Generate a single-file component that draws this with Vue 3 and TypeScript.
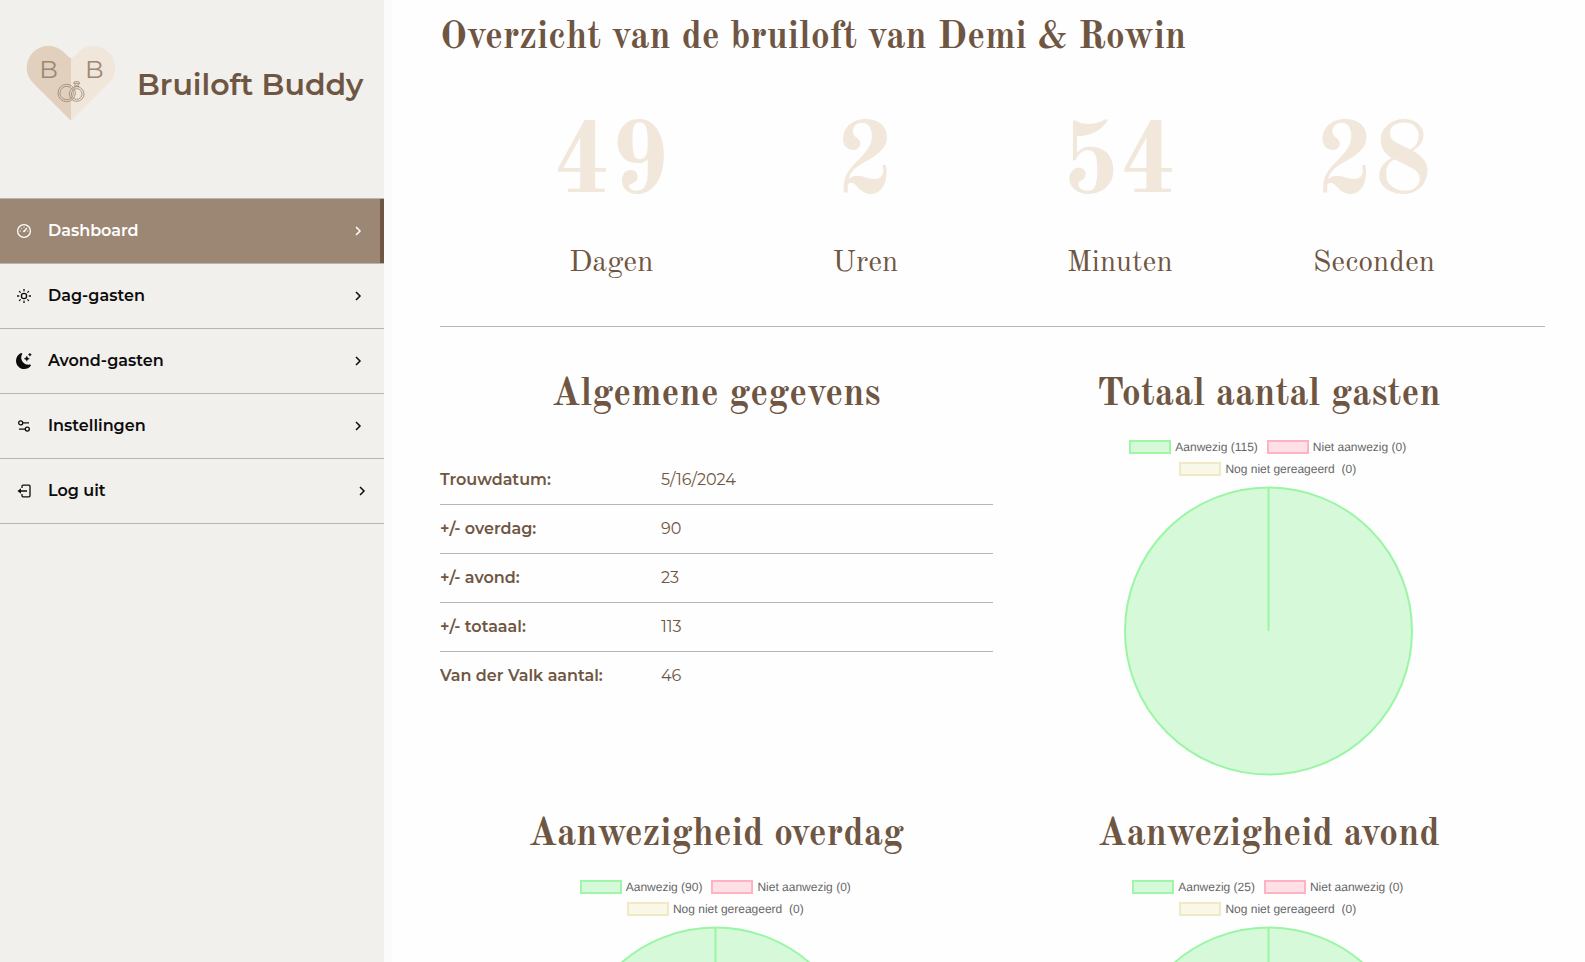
<script setup lang="ts">
interface MenuItem {
  label: string
  icon: 'gauge' | 'sun' | 'moon' | 'sliders'
  active?: boolean
}

interface Chart {
  title: string
  present: number
}

const menu: MenuItem[] = [
  { label: 'Dashboard', icon: 'gauge', active: true },
  { label: 'Dag-gasten', icon: 'sun' },
  { label: 'Avond-gasten', icon: 'moon' },
  { label: 'Instellingen', icon: 'sliders' },
]

const countdown = [
  { value: 49, label: 'Dagen' },
  { value: 2, label: 'Uren' },
  { value: 54, label: 'Minuten' },
  { value: 28, label: 'Seconden' },
]

const details = [
  { label: 'Trouwdatum:', value: '5/16/2024' },
  { label: '+/- overdag:', value: '90' },
  { label: '+/- avond:', value: '23' },
  { label: '+/- totaaal:', value: '113' },
  { label: 'Van der Valk aantal:', value: '46' },
]

const charts: Chart[] = [
  { title: 'Totaal aantal gasten', present: 115 },
  { title: 'Aanwezigheid overdag', present: 90 },
  { title: 'Aanwezigheid avond', present: 25 },
]
</script>

<template>
  <div class="layout">
    <aside class="sidebar">
      <div class="brand">
        <svg class="logo" viewBox="0 0 300 270" aria-hidden="true">
          <path d="M153 242 40 130A65 65 0 0 1 131 36L143 48Q149 54 153 55Z" fill="#e0d0bd" />
          <path d="M153 242 266 130A65 65 0 0 0 175 36L163 48Q157 54 153 55Z" fill="#f1e6da" />
          <text x="58" y="114" class="initial">B</text>
          <text x="195" y="114" class="initial">B</text>
          <g fill="none" stroke="#9c8774" stroke-width="2.5">
            <circle cx="140" cy="159" r="26" />
            <circle cx="140" cy="159" r="20" />
            <circle cx="170" cy="162" r="22" />
            <circle cx="170" cy="162" r="16" />
            <path d="M164 125h12l3 5-9 7-9-7zM164 136v5M176 136v5M161 130h18M164 139h12" />
          </g>
        </svg>
        <span class="brand-name">Bruiloft Buddy</span>
      </div>
      <nav class="menu">
        <a v-for="item in menu" :key="item.label" href="#" class="item" :class="{ active: item.active }">
          <svg class="icon" viewBox="0 0 16 16" aria-hidden="true">
            <g v-if="item.icon === 'gauge'" fill="none" stroke="currentColor" stroke-linecap="round">
              <circle cx="8" cy="8" r="6.4" stroke-width="1.3" />
              <path d="M8.2 8.2 10.6 5.4" stroke-width="1.4" />
              <circle cx="8" cy="8.4" r=".6" />
              <path d="M4.2 8h.3M5.2 5.3l.2.2M8 4.1v.3M11.6 8h.2" stroke-width="1" />
            </g>
            <g v-else-if="item.icon === 'sun'" fill="none" stroke="currentColor" stroke-width="1.3">
              <circle cx="8" cy="8" r="2.6" />
              <path d="M8 1v2.2M8 12.8V15M1 8h2.2M12.8 8H15M3.1 3.1l1.5 1.5M11.4 11.4l1.5 1.5M3.1 12.9l1.5-1.5M11.4 4.6l1.5-1.5" />
            </g>
            <g v-else-if="item.icon === 'moon'" fill="currentColor">
              <path d="M6 .3a.8.8 0 0 1 .1.9A7.2 7.2 0 0 0 5.2 4.5c0 4 3.3 7.2 7.3 7.2.5 0 1 0 1.5-.1a.8.8 0 0 1 .8.3.7.7 0 0 1 0 .9A8.3 8.3 0 0 1 8.3 16C3.7 16 0 12.3 0 7.7 0 4.3 2.1 1.3 5.1.1A.8.8 0 0 1 6 .3z" />
              <path d="M10.8 3.1c.5 1.7.9 2 2.6 2.6-1.7.6-2.1.9-2.6 2.6-.5-1.7-.9-2-2.6-2.6 1.7-.6 2.1-.9 2.6-2.6zM13.900.1c.3 1 .6 1.3 1.6 1.6-1 .3-1.3.6-1.6 1.6-.3-1-.6-1.3-1.6-1.6 1-.3 1.3-.6 1.600-1.600z" stroke="currentColor" stroke-width=".4" />
            </g>
            <g v-else fill="none" stroke="currentColor" stroke-width="1.3">
              <circle cx="4.7" cy="4.9" r="2" />
              <path d="M6.7 4.9H13M3 11.1h6.3" />
              <circle cx="11.3" cy="11.1" r="2" />
            </g>
          </svg>
          <span class="text">{{ item.label }}</span>
          <svg class="chevron" viewBox="0 0 12 12" aria-hidden="true"><path d="M4 2l4 4-4 4" /></svg>
        </a>
        <button type="button" class="item">
          <svg class="icon" viewBox="0 0 16 16" aria-hidden="true">
            <path d="M6 5V3.2q0-1 1-1h6q1 0 1 1v9.6q0 1-1 1H7q-1 0-1-1V11M3.5 8H11" fill="none" stroke="currentColor" stroke-width="1.3" />
            <path d="M1.500 8 5 5.300v5.400z" fill="currentColor" />
          </svg>
          <span class="text">Log uit</span>
          <svg class="chevron" viewBox="0 0 12 12" aria-hidden="true"><path d="M4 2l4 4-4 4" /></svg>
        </button>
      </nav>
    </aside>

    <main class="content">
      <h1>Overzicht van de bruiloft van Demi &amp; Rowin</h1>
      <section class="countdown">
        <div v-for="part in countdown" :key="part.label" class="part">
          <span class="number">{{ part.value }}</span>
          <span class="unit">{{ part.label }}</span>
        </div>
      </section>

      <div class="panels">
        <section class="panel">
          <h2>Algemene gegevens</h2>
          <table class="details">
            <tbody>
              <tr v-for="row in details" :key="row.label">
                <th scope="row">{{ row.label }}</th>
                <td>{{ row.value }}</td>
              </tr>
            </tbody>
          </table>
        </section>
        <section v-for="chart in charts" :key="chart.title" class="panel">
          <h2>{{ chart.title }}</h2>
          <ul class="legend">
            <li><i class="swatch green"></i>Aanwezig ({{ chart.present }})</li>
            <li><i class="swatch pink"></i>Niet aanwezig (0)</li>
            <li><i class="swatch sand"></i>{{ 'Nog niet gereageerd  (0)' }}</li>
          </ul>
          <svg class="pie" viewBox="0 0 290 290" role="img" :aria-label="chart.title">
            <circle cx="144.500" cy="145" r="143.500" />
            <path d="M144.500 145V1" />
          </svg>
        </section>
      </div>
    </main>
  </div>
</template>

<style>
body {
  margin: 0;
}
</style>

<style scoped>
* {
  box-sizing: border-box;
}

.layout {
  display: flex;
  height: 100vh;
  overflow: hidden;
  background: #fefefe;
  color: #6f5643;
  font-family: Montserrat, Inter, sans-serif;
  font-size: 16px;
}

.sidebar {
  flex: 0 0 384px;
  background: #f2f0ec;
}

.brand {
  display: flex;
  align-items: center;
  gap: 17px;
  padding: 40px 0 68px 20px;
}

.logo {
  flex: none;
  width: 100px;
  height: 90px;
}

.initial {
  font-family: Montserrat, Inter, sans-serif;
  font-size: 74px;
  font-weight: 400;
  fill: #9c8774;
}

.brand-name {
  padding-bottom: 2px;
  font-size: 30px;
  font-weight: 600;
  white-space: nowrap;
}

.menu {
  border-top: 1px solid #b5b5b3;
}

.item {
  display: flex;
  align-items: center;
  gap: 16px;
  width: 100%;
  height: 65px;
  padding: 0 16px;
  border: 0 solid #b5b5b3;
  border-bottom-width: 1px;
  background: none;
  color: #0c0c0c;
  font-family: inherit;
  font-size: 16px;
  font-weight: 600;
  text-align: left;
  text-decoration: none;
}

a.item {
  padding-right: 20px;
}

.item.active {
  background: #9c8774;
  box-shadow: inset -4px 0 #6f5643;
  color: #fff;
}

.icon {
  width: 16px;
  height: 16px;
}

.text {
  flex: 1;
  padding-bottom: 2px;
}

.chevron {
  width: 12px;
  height: 12px;
  fill: none;
  stroke: currentColor;
  stroke-width: 1.5;
}

.content {
  flex: 1;
  min-width: 0;
  padding: 12px 40px 0 48px;
  border-left: 8px solid #fbfbfb;
  overflow: hidden auto;
  scrollbar-width: none;
}

h1,
h2 {
  margin: 0;
  font-family: "Old Standard TT", "Liberation Serif", serif;
  font-size: 38px;
  font-weight: 700;
  line-height: 52px;
}

h2 {
  text-align: center;
}

.countdown {
  display: grid;
  grid-template-columns: repeat(4, 1fr);
  padding: 32px 44px 42px;
  border-bottom: 1px solid #b5b5b3;
}

.part {
  display: flex;
  flex-direction: column;
  align-items: center;
  font-family: "Old Standard TT", "Liberation Serif", serif;
}

.number {
  color: #f1e7db;
  font-size: 100px;
  font-weight: 700;
  line-height: 140px;
}

.unit {
  margin-top: 6px;
  font-size: 30px;
  line-height: 42px;
}

.panels {
  display: grid;
  grid-template-columns: 1fr 1fr;
  padding-top: 42px;
}

.panel {
  display: flex;
  flex-direction: column;
  align-items: center;
  height: 440px;
}

.details {
  width: 100%;
  margin-top: 34px;
  border-collapse: collapse;
  table-layout: fixed;
}

.details th,
.details td {
  height: 49px;
  padding: 0;
  border-bottom: 1px solid #b5b5b3;
  text-align: left;
}

.details th {
  width: 40%;
  font-weight: 600;
}

.details td {
  font-weight: 400;
}

.details tr:last-child > * {
  border-bottom: 0;
}

.legend {
  display: flex;
  flex-wrap: wrap;
  justify-content: center;
  column-gap: 9px;
  width: 330px;
  margin: 15px 0 6px;
  padding: 0 2px 0 0;
  color: #666;
  font-family: "Liberation Sans", Arial, sans-serif;
  font-size: 12px;
  line-height: 22px;
  list-style: none;
  text-rendering: geometricPrecision;
}

.legend li {
  display: flex;
  align-items: center;
  gap: 4px;
  white-space: pre;
}

.swatch {
  width: 42px;
  height: 14px;
  border: 2px solid;
}

.green {
  border-color: #9ff6a8;
  background: #d6fad9;
}

.pink {
  border-color: #ffb3c2;
  background: #ffe0e6;
}

.sand {
  border-color: #f0eac4;
  background: #f9f7e8;
}

.pie {
  flex: none;
  width: 290px;
  height: 290px;
  fill: #d6fad9;
  stroke: #9af6a4;
  stroke-width: 2;
}
</style>
